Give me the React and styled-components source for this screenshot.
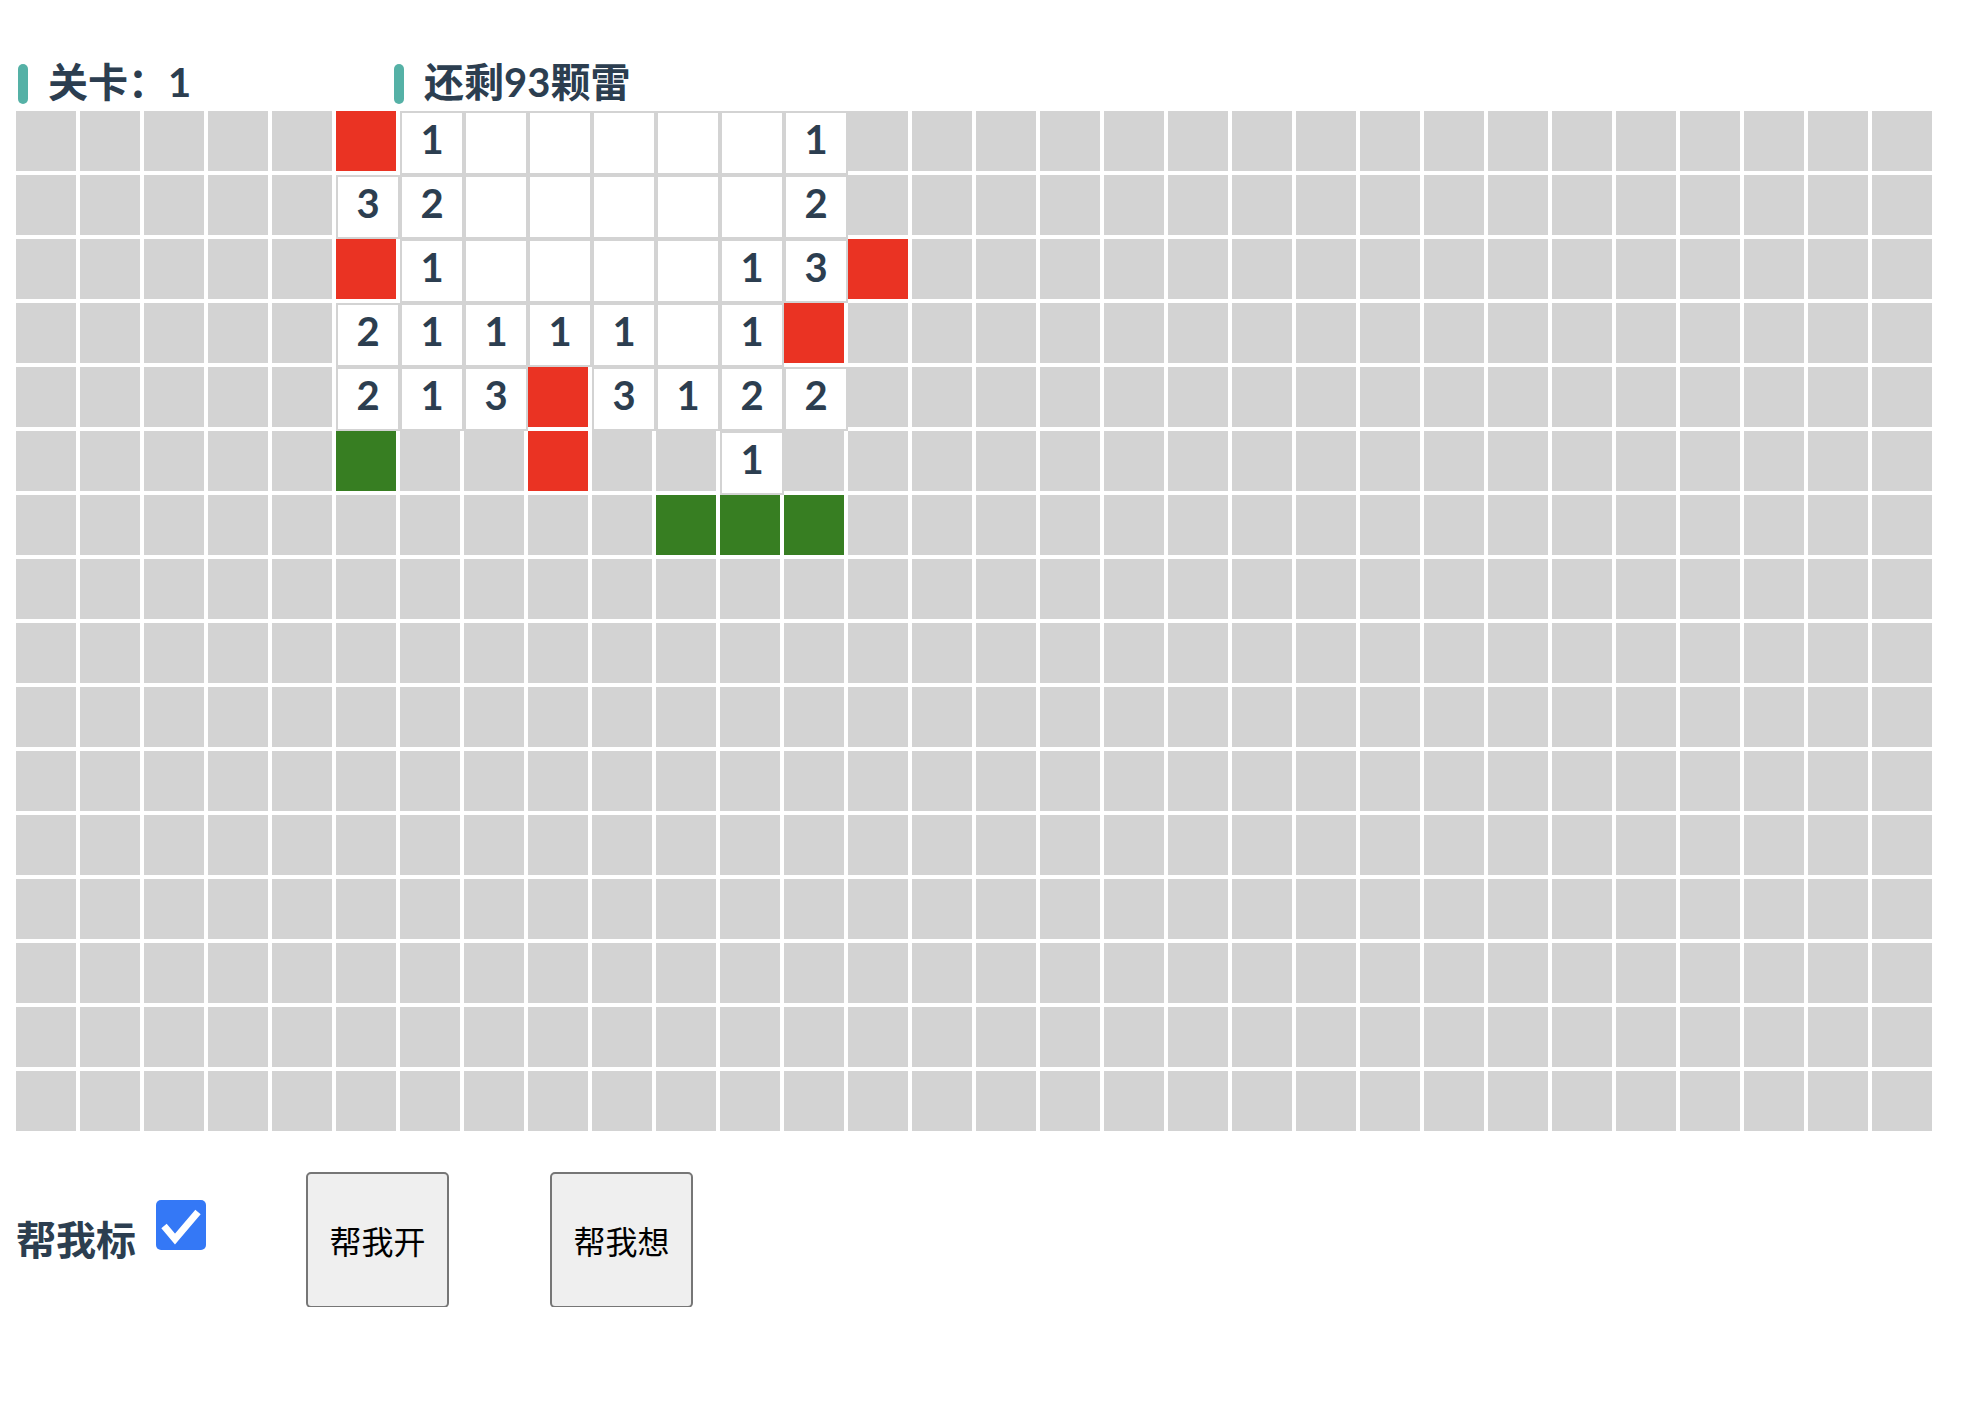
import React, { useState } from 'react';
import styled, { createGlobalStyle } from 'styled-components';

const GlobalStyle = createGlobalStyle`
  body {
    margin: 0;
    background: #fff;
    font-family: "Lato", "Noto Sans CJK SC", sans-serif;
    color: #2c3e50;
  }
`;

// . = closed, R = flagged (red), G = suggested (green), 0-8 = opened
const BOARD = [
  '.....R1000001.................',
  '.....32000002.................',
  '.....R1000013R................',
  '.....2111101R.................',
  '.....213R3122.................',
  '.....G..R..1..................',
  '..........GGG.................',
  ...Array(9).fill('..............................'),
];

const Page = styled.div`
  padding: 0 16px;
`;

const Header = styled.div`
  display: flex;
  align-items: center;
  height: 40px;
  margin-top: 64px;
  margin-bottom: 7px;
  padding-left: 2px;
`;

const HeaderItem = styled.div`
  display: flex;
  align-items: center;
  width: ${(p) => p.width}px;
  font-size: 40px;
  font-weight: 700;
  line-height: 40px;

  &::before {
    content: '';
    width: 10px;
    height: 40px;
    border-radius: 5px;
    background: #55b1a6;
    margin-right: 20px;
  }
`;

const HeaderText = styled.span`
  padding-bottom: 5px;
`;

const Grid = styled.div`
  display: grid;
  grid-template-columns: repeat(30, 60px);
  grid-auto-rows: 60px;
  gap: 4px;
`;

const Cell = styled.div`
  width: 60px;
  height: 60px;
  background: ${(p) => (p.kind === 'R' ? '#ea3323' : p.kind === 'G' ? '#377e22' : '#d3d3d3')};
`;

const OpenCell = styled.div`
  width: 60px;
  height: 52px;
  padding-bottom: 8px;
  box-sizing: content-box;
  border: 2px solid #d3d3d3;
  background: #fff;
  display: flex;
  align-items: center;
  justify-content: center;
  font-size: 40px;
  font-weight: 700;
  line-height: 1;
`;

const Controls = styled.div`
  display: flex;
  align-items: center;
  margin-top: 41px;
  height: 135px;
`;

const Label = styled.span`
  font-size: 40px;
  font-weight: 700;
  line-height: 40px;
`;

const CheckBox = styled.button`
  width: 50px;
  height: 50px;
  margin: 0 0 30px 20px;
  padding: 0;
  border: none;
  border-radius: 5px;
  background: ${(p) => (p.checked ? '#3478f6' : '#fff')};
  display: flex;
  align-items: center;
  justify-content: center;
`;

const ActionButton = styled.button`
  width: 143px;
  height: 136px;
  margin-left: ${(p) => p.offset}px;
  background: #efefef;
  border: 2px solid #767676;
  border-radius: 5px;
  font-family: "Noto Sans CJK SC", sans-serif;
  font-size: 32px;
  color: #000;
  padding: 0;
`;

const App = () => {
  const [autoFlag, setAutoFlag] = useState(true);

  return (
    <Page>
      <GlobalStyle />
      <Header>
        <HeaderItem width={376}>
          <HeaderText>关卡：1</HeaderText>
        </HeaderItem>
        <HeaderItem width={400}>
          <HeaderText>还剩93颗雷</HeaderText>
        </HeaderItem>
      </Header>

      <Grid>
        {BOARD.map((row, r) =>
          row.split('').map((ch, c) =>
            /[0-9]/.test(ch) ? (
              <OpenCell key={`${r}-${c}`}>{ch === '0' ? '' : ch}</OpenCell>
            ) : (
              <Cell key={`${r}-${c}`} kind={ch} />
            )
          )
        )}
      </Grid>

      <Controls>
        <Label>帮我标</Label>
        <CheckBox checked={autoFlag} onClick={() => setAutoFlag(!autoFlag)}>
          {autoFlag && (
            <svg width="50" height="50" viewBox="0 0 50 50">
              <polyline
                points="8,26 19,39 42,12"
                fill="none"
                stroke="#fff"
                strokeWidth="7"
                strokeLinejoin="miter"
              />
            </svg>
          )}
        </CheckBox>
        <ActionButton offset={100}>帮我开</ActionButton>
        <ActionButton offset={101}>帮我想</ActionButton>
      </Controls>
    </Page>
  );
};

export default App;
